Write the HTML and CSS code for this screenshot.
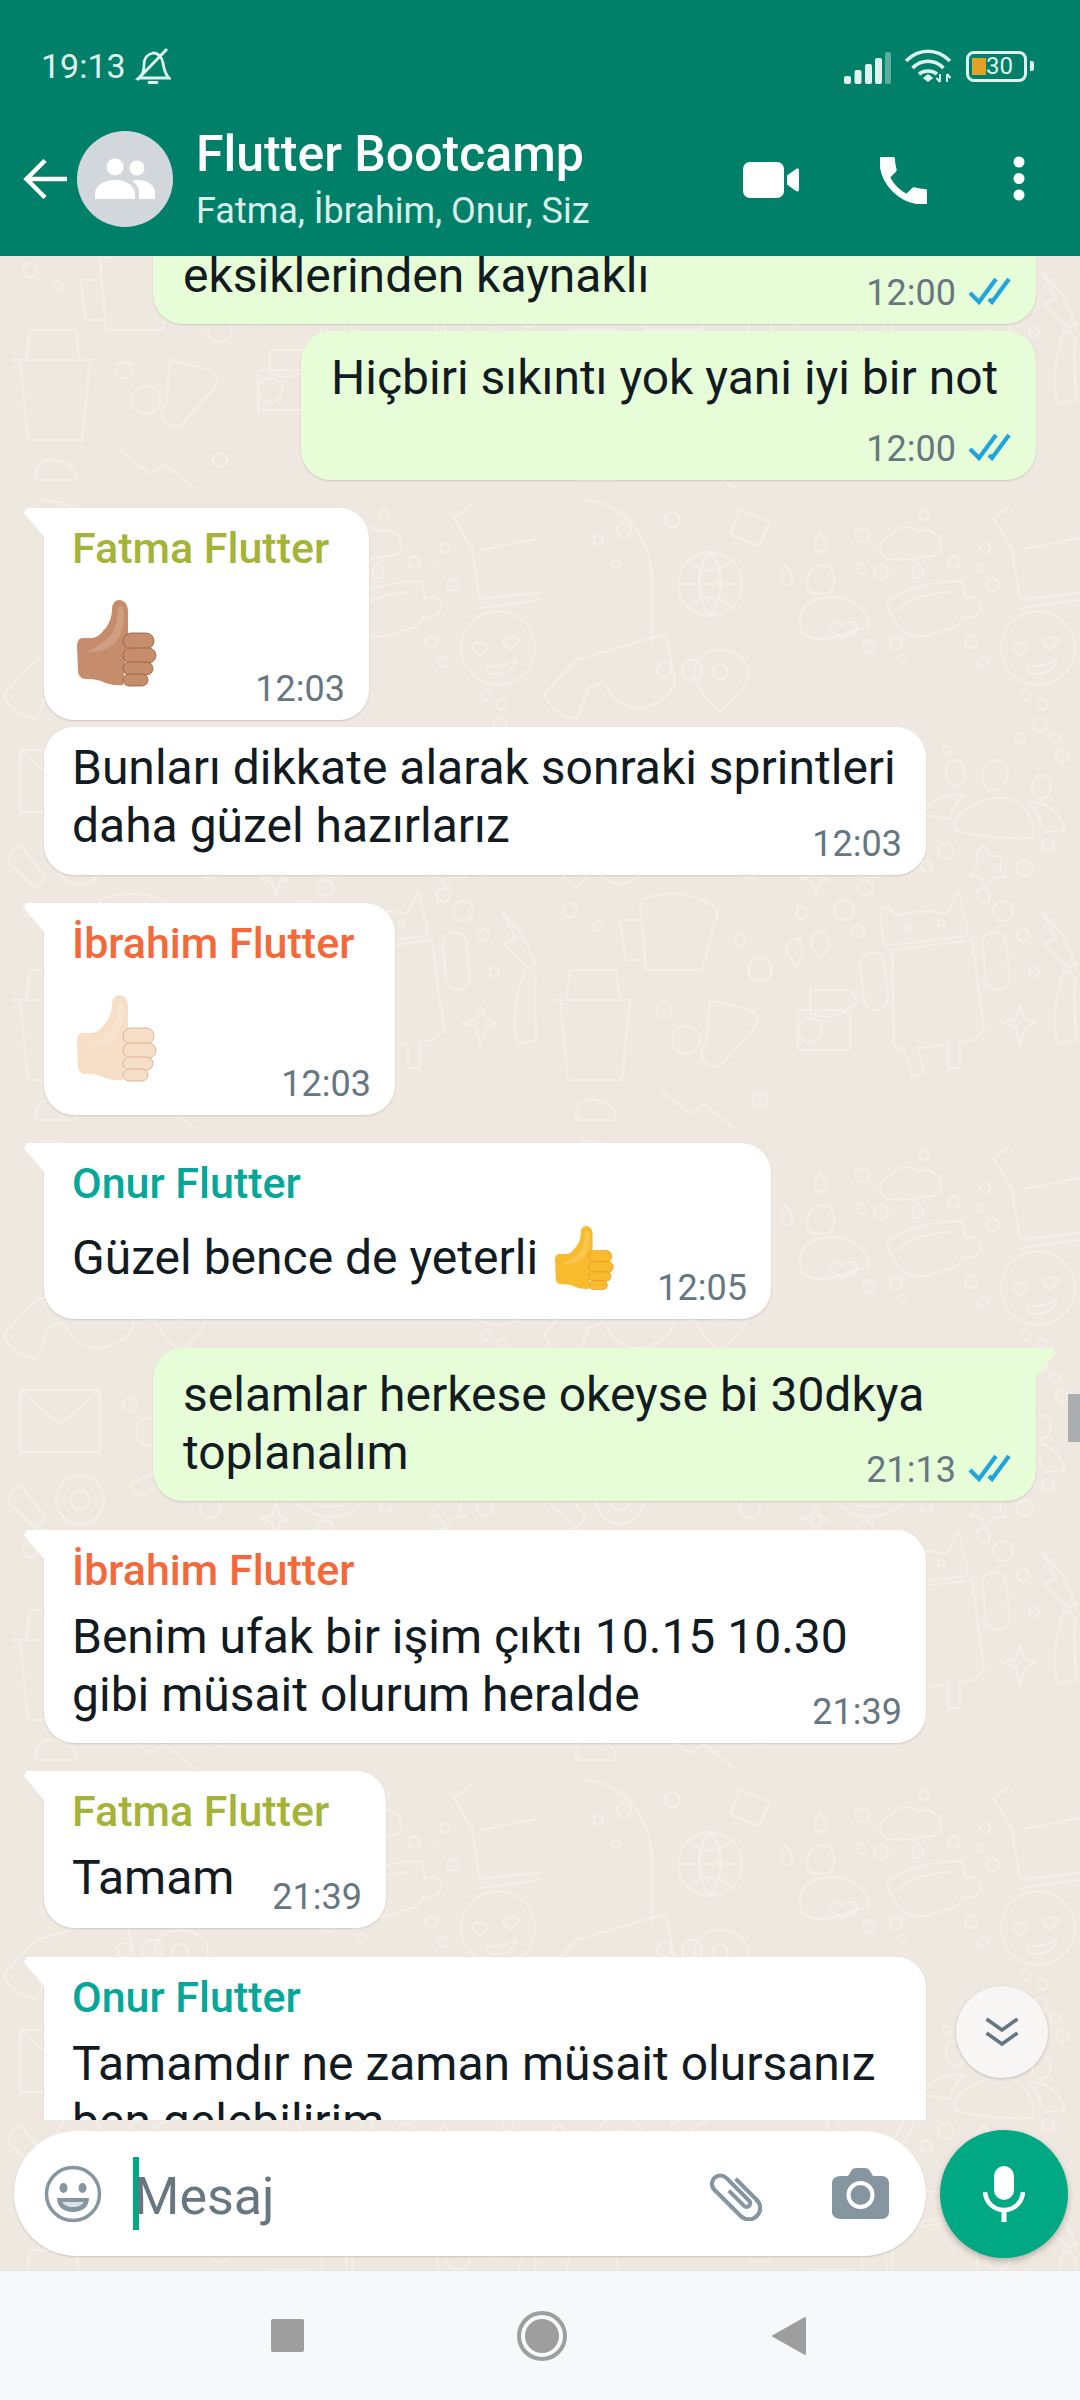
FILE: index.html
```html
<!DOCTYPE html>
<html>
<head>
    <meta charset="utf-8">
    <meta name="viewport" content="width=device-width, initial-scale=1">
    <title>Flutter Bootcamp</title>

    <link rel="stylesheet" href="styles.css">

</head>
<body>
    <svg class="defs" width="0" height="0">
        <symbol id="thumb" viewBox="0 0 80 88">
            <path class="hand" d="M42 0c6 0 9 5 9 12v22l-5 51c-8 1-16-1-22-4-6-2-12-2-16-2-5-1-7-4-7-9L0 46c0-5 2-8 6-8h8c5 0 9-3 12-7 6-6 9-14 9-22 0-5 3-9 7-9z"/>
            <path d="M43 6c3 0 4 4 4 8 0 9-2 20-8 28-8 8-18 10-30 10 14-6 26-14 30-28 2-8 1-18 4-18z" fill="#fff" opacity=".16"/>
            <rect class="finger" x="46" y="33" width="31" height="16" rx="8"/>
            <rect class="finger" x="46" y="48" width="33" height="15" rx="7.5"/>
            <rect class="finger" x="46" y="62" width="30" height="13" rx="6.5"/>
            <rect class="finger" x="46" y="74" width="25" height="12" rx="6"/>
        </symbol>
        <symbol id="ticks" viewBox="0 0 43 28">
            <path d="M2 16l9 9L28 2M21 22l3 3L41 2" fill="none" stroke="#1fa5dc" stroke-width="4.2"/>
        </symbol>
    </svg>

    <div class="screen">
        <svg class="doodles" width="1080" height="2270">
            <defs>
                <pattern id="tile" width="540" height="640" patternUnits="userSpaceOnUse" patternTransform="translate(780 500)">
                    <g fill="none" stroke="#f4efe9" stroke-width="2" stroke-linejoin="round" stroke-linecap="round">
                        <path d="M105 58c-8-8-6-20 6-22 4-10 20-12 26-4 10-6 24 2 24 12 2 8-4 12-12 12-14 2-30 6-44 2z"/>
                        <path d="M40 32c-6 10-8 18 0 20 8 0 10-8 0-20zM138 62c-6 8-8 16 0 16 8 0 6-8 0-16zM5 65c-5 8-6 20 2 20 7 0 8-10-2-20z"/>
                        <circle cx="82" cy="35" r="7"/>
                        <circle cx="81" cy="69" r="5"/>
                        <circle cx="101" cy="72" r="7"/>
                        <circle cx="174" cy="62" r="6"/>
                        <circle cx="205" cy="48" r="5"/>
                        <circle cx="200" cy="68" r="4"/>
                        <circle cx="213" cy="85" r="6"/>
                        <circle cx="144" cy="15" r="5"/>
                        <circle cx="89" cy="146" r="6"/>
                        <circle cx="116" cy="143" r="6"/>
                        <circle cx="122" cy="158" r="4"/>
                        <circle cx="191" cy="142" r="6"/>
                        <circle cx="203" cy="162" r="5"/>
                        <path d="M44 65c-12 0-18 10-17 20 1 8 8 9 16 9 10 0 12-10 11-16-1-6-4-13-10-13z"/>
                        <path d="M20 125c-2-20 14-28 34-28 18 0 36 14 34 30-14 2-28 10-42 12-14 0-24-2-26-14zM48 128c2-6 10-8 14-2 8-8 18-2 14 6l-14 6z"/>
                        <path d="M107 105c8-16 50-24 74-24 4 10 4 14 4 18 10-6 18 2 16 10-4 8-12 10-18 8l-6 10c-18 4-28 10-40 10-14-2-22-14-30-32zM118 110c10-12 36-18 54-18"/>
                        <path d="M230 5l-16 14 18 30 8 50 60-6"/>
                        <path d="M240 50l60-12M240 108l60-8"/>
                        <circle cx="258" cy="148" r="37"/>
                        <path d="M232 148c4-8 14-6 16 0l-8 8zM262 142c6-6 14-6 18-2l-10 10zM246 165c10 2 22 0 30-5-2 10-10 14-20 14-6 0-10-3-10-9z"/>
                        <circle cx="246" cy="195" r="5"/>
                        <circle cx="262" cy="204" r="5"/>
                        <circle cx="260" cy="225" r="7"/>
                        <circle cx="240" cy="238" r="5"/>
                        <circle cx="275" cy="238" r="5"/>
                        <circle cx="282" cy="256" r="6"/>
                        <circle cx="167" cy="250" r="4"/>
                        <path d="M176 260c-10 0-12 12-8 20 2 8 14 8 16-2 2-8 0-18-8-18zM216 260c-12 0-16 14-12 24 4 8 18 8 22-2 4-10 0-22-10-22zM262 275c-8 0-12 12-8 20 4 6 14 4 16-4 2-8-2-16-8-16z"/>
                        <path d="M144 315c2-10 14-22 40-20-8 8-12 14-14 24zM174 330c0-20 26-32 48-32 20 0 32 18 32 40-26 2-58-2-80-8zM248 302c18-2 36 14 36 28l-20 2c-4-10-6-22-16-30z"/>
                        <circle cx="90" cy="333" r="44"/>
                        <circle cx="90" cy="333" r="34"/>
                        <path d="M78 308l6 25c2 4 8 2 8-2l-2-26"/>
                        <circle cx="166" cy="351" r="8"/>
                        <circle cx="146" cy="366" r="6"/>
                        <circle cx="245" cy="368" r="8"/>
                        <circle cx="268" cy="345" r="6"/>
                        <path d="M204 345l8 12 10-2-2 14 6 8-12 0-8 10-6-10-10-2 8-10-2-12z"/>
                        <path d="M36 362l4 14 8 4-8 2-4 14-4-14-12-4 12-2z"/>
                        <circle cx="85" cy="388" r="8"/>
                        <circle cx="64" cy="410" r="10"/>
                        <circle cx="22" cy="413" r="6"/>
                        <circle cx="78" cy="431" r="6"/>
                        <circle cx="203" cy="395" r="7"/>
                        <circle cx="223" cy="411" r="10"/>
                        <circle cx="243" cy="435" r="6"/>
                        <circle cx="254" cy="472" r="5"/>
                        <path d="M100 408c6-4 12 4 18 8 14-6 36-6 48-2 6-6 8-18 12-22 6 8 2 18 6 24 4 8 4 14 2 20l-82 10c-2-12-2-24-4-38z"/>
                        <circle cx="127" cy="428" r="3"/>
                        <circle cx="161" cy="423" r="3"/>
                        <path d="M112 450l80-10 12 90-10 10-14 2v26h-12v-24l-30 4 6 26-12 2-8-26-10-4z"/>
                        <rect x="82" y="452" width="24" height="58" rx="12" transform="rotate(-6 94 481)"/>
                        <rect x="204" y="432" width="24" height="58" rx="12" transform="rotate(-6 216 461)"/>
                        <path d="M18 438c-12 2-16 16-6 20l2 8c6-2 10-10 8-18 0-4-2-8-4-10zM42 432c-12 0-14 14-6 20l4 6c6-4 12-14 8-20-2-4-4-6-6-6z"/>
                        <path d="M262 412l20 22 14 30-8 4-24-24 12-6z"/>
                        <path d="M30 490h40l8 12c-16 14-34 20-48 10zM18 510h52v40H18z"/>
                        <circle cx="30" cy="530" r="12"/>
                        <path d="M240 505l6 14 10 4-10 4-6 18-4-18-14-4 14-4z"/>
                        <path d="M284 472c10-2 14 10 10 18l2 50-18 4c-6-16-4-44 6-72z"/>
                        <!-- second half of the tile -->
                        <path d="M312 130l90-26 8 44c2 18-24 32-40 30-14-2-26-14-30-26l-16 6-10 30c-14 2-30-12-34-24z" transform="translate(24 30)"/>
                        <path d="M340 0c46 0 72 40 72 84v60"/>
                        <circle cx="358" cy="40" r="5"/>
                        <circle cx="376" cy="64" r="4"/>
                        <circle cx="384" cy="30" r="7"/>
                        <circle cx="470" cy="84" r="32"/>
                        <path d="M438 84h64M470 52c-14 14-14 48 0 64M470 52c14 14 14 48 0 64M448 60c14 14 30 14 44 0M448 108c14-14 30-14 44 0"/>
                        <circle cx="432" cy="20" r="8"/>
                        <path d="M500 10l30 12-12 24-28-12z"/>
                        <circle cx="424" cy="170" r="7"/>
                        <circle cx="452" cy="170" r="10"/>
                        <path d="M480 150c16 0 28 10 28 22 0 16-18 30-28 40-10-10-26-24-26-40 0-12 12-22 26-22z"/>
                        <circle cx="480" cy="172" r="8"/>
                        <path d="M320 250h80v62h-80zM320 250l40 34 40-34"/>
                        <circle cx="430" cy="265" r="7"/>
                        <circle cx="450" cy="292" r="14"/>
                        <path d="M500 240l12 26 26 4-20 18 4 26-22-14-22 14 6-26-20-18 26-4z"/>
                        <circle cx="380" cy="360" r="24"/>
                        <circle cx="380" cy="360" r="10"/>
                        <path d="M320 345c-12 4-16 20-4 24l20 20 10-12z"/>
                        <path d="M430 345l60-32 8 10-60 34z"/>
                        <circle cx="510" cy="368" r="10"/>
                        <circle cx="330" cy="410" r="7"/>
                        <circle cx="358" cy="426" r="5"/>
                        <path d="M400 400c30-12 60-6 78 10l-16 60h-56z"/>
                        <path d="M400 420h-20l6 40h20"/>
                        <circle cx="500" cy="440" r="6"/>
                        <circle cx="520" cy="470" r="12"/>
                        <path d="M320 500h70l-8 80h-54zM314 500h82M330 470h46l4 30h-54z"/>
                        <circle cx="424" cy="510" r="8"/>
                        <circle cx="446" cy="540" r="14"/>
                        <path d="M470 500l40 10c8 4 10 12 4 18l-30 34c-6 6-14 6-18 0-6-6-6-12 0-18z"/>
                        <path d="M348 600c-8 0-14 8-12 20h40c0-12-8-20-28-20zM420 590l30 24 14-10 30 24"/>
                        <circle cx="520" cy="600" r="7"/>
                    </g>
                </pattern>
            </defs>
            <rect width="1080" height="2270" fill="url(#tile)"/>
        </svg>

        <header class="top">
            <div class="statusbar">
                <span class="clock">19:13</span>
                <svg class="bell" width="36" height="38" viewBox="0 0 36 38" fill="none" stroke="#dff3ee" stroke-width="2.8">
                    <path d="M4 31c4-3 5-7 5-13 0-7 4-11 9-12 5 0 9 4 10 10 1 7 2 11 6 15z"/>
                    <path d="M14 35.500h8" stroke-linecap="round"/>
                    <path d="M2 33L32 2" stroke-width="3"/>
                </svg>
                <svg class="signal" width="48" height="32" viewBox="0 0 48 32" fill="#dff3ee">
                    <rect x="0" y="24" width="7" height="8" rx="2"/>
                    <rect x="10.500" y="18" width="7" height="14" rx="2"/>
                    <rect x="21" y="12" width="7" height="20" rx="2"/>
                    <rect x="31" y="6" width="7" height="26" rx="2"/>
                    <rect x="41" y="0" width="6" height="32" rx="2" opacity=".4"/>
                </svg>
                <svg class="wifi" width="46" height="34" viewBox="0 0 46 34" fill="none" stroke="#dff3ee" stroke-width="3.6">
                    <path d="M1 12c13-13 31-13 44 0"/>
                    <path d="M7.500 19c9-9 22-9 31 0"/>
                    <path d="M14 25c5-4 13-4 18 0"/>
                    <path d="M19 29l4-3 4 3-4 3z" fill="#dff3ee" stroke-width="1.500"/>
                    <path d="M35 25v8M31.500 29l3.500 4M42 25v8M42 25l3.500 4" stroke-width="2"/>
                </svg>
                <div class="battery">
                    <div class="battery-fill"></div>
                    <span class="battery-text">30</span>
                </div>
                <div class="battery-nub"></div>
            </div>
            <div class="toolbar">
                <svg class="back" width="44" height="42" viewBox="0 0 44 42" fill="none" stroke="#fff" stroke-width="4.500">
                    <path d="M44 21H4M22 2.500L3.500 21 22 39.500"/>
                </svg>
                <div class="avatar">
                    <svg width="62" height="42" viewBox="0 0 62 42" fill="#fff">
                        <circle cx="21" cy="9" r="8.500"/>
                        <circle cx="43" cy="10" r="7.500"/>
                        <path d="M1 41v-5c0-9 10-14 20-14s20 5 20 14v5z"/>
                        <path d="M45 41v-6c0-5-2-9-7-12 2-1 4-1 6-1 9 0 17 5 17 12v7z"/>
                    </svg>
                </div>
                <div class="group-info">
                    <div class="group-name">Flutter Bootcamp</div>
                    <div class="group-members">Fatma, İbrahim, Onur, Siz</div>
                </div>
                <svg class="icon-video" width="56" height="36" viewBox="0 0 56 36" fill="#fff">
                    <rect width="41" height="36" rx="7"/>
                    <path d="M44 13.500l9-6.500c1.500-1 3-.5 3 1.500v19c0 2-1.500 2.500-3 1.500l-9-6.500z"/>
                </svg>
                <svg class="icon-call" width="47" height="47" viewBox="3 3 18 18" fill="#fff" stroke="#fff" stroke-width=".5" stroke-linejoin="round">
                    <path d="M6.620 10.790c1.440 2.830 3.760 5.140 6.590 6.590l2.200-2.200c.27-.27.67-.36 1.020-.24 1.120.37 2.330.57 3.570.57.55 0 1 .45 1 1V20c0 .55-.45 1-1 1-9.390 0-17-7.610-17-17 0-.55.45-1 1-1h3.500c.55 0 1 .45 1 1 0 1.250.2 2.450.57 3.570.11.35.03.74-.25 1.020l-2.200 2.200z"/>
                </svg>
                <svg class="icon-more" width="12" height="45" viewBox="0 0 12 45" fill="#fff">
                    <circle cx="6" cy="6" r="5.500"/>
                    <circle cx="6" cy="22.500" r="5.500"/>
                    <circle cx="6" cy="39" r="5.500"/>
                </svg>
            </div>
        </header>

        <main class="chat">
            <div class="messages">
                <div class="bubble out w-long first">
                    <div class="text">eksiklerinden kaynaklı</div>
                    <div class="meta over">12:00 <svg class="tick"><use href="#ticks"/></svg></div>
                </div>
                <div class="bubble out w-mid same">
                    <div class="text">Hiçbiri sıkıntı yok yani iyi bir not</div>
                    <div class="meta below">12:00 <svg class="tick"><use href="#ticks"/></svg></div>
                </div>

                <div class="bubble in tail w-fatma">
                    <div class="name fatma">Fatma Flutter</div>
                    <svg class="emoji medium"><use href="#thumb"/></svg>
                    <div class="meta after-emoji">12:03</div>
                </div>
                <div class="bubble in w-wide same">
                    <div class="text">Bunları dikkate alarak sonraki sprintleri<br>daha güzel hazırlarız</div>
                    <div class="meta over">12:03</div>
                </div>

                <div class="bubble in tail w-ibrahim">
                    <div class="name ibrahim">İbrahim Flutter</div>
                    <svg class="emoji light"><use href="#thumb"/></svg>
                    <div class="meta after-emoji">12:03</div>
                </div>

                <div class="bubble in tail w-onur">
                    <div class="name onur">Onur Flutter</div>
                    <div class="text with-emoji">
                        <span>Güzel bence de yeterli</span>
                        <svg class="emoji-small"><use href="#thumb"/></svg>
                    </div>
                    <div class="meta over-emoji">12:05</div>
                </div>

                <div class="bubble out tail w-long wide-gap">
                    <div class="text">selamlar herkese okeyse bi 30dkya<br>toplanalım</div>
                    <div class="meta over">21:13 <svg class="tick"><use href="#ticks"/></svg></div>
                </div>

                <div class="bubble in tail w-wide wide-gap">
                    <div class="name ibrahim">İbrahim Flutter</div>
                    <div class="text">Benim ufak bir işim çıktı 10.15 10.30<br>gibi müsait olurum heralde</div>
                    <div class="meta over tight">21:39</div>
                </div>

                <div class="bubble in tail w-tamam">
                    <div class="name fatma">Fatma Flutter</div>
                    <div class="text">Tamam</div>
                    <div class="meta over loose">21:39</div>
                </div>

                <div class="bubble in tail w-wide wide-gap">
                    <div class="name onur">Onur Flutter</div>
                    <div class="text">Tamamdır ne zaman müsait olursanız<br>ben gelebilirim</div>
                </div>
            </div>

            <div class="scrollbar"></div>
            <div class="to-bottom">
                <svg width="34" height="30" viewBox="0 0 34 30" fill="none" stroke="#667781" stroke-width="3.600">
                    <path d="M1.500 2l15.500 11L32.500 2M1.500 16l15.500 11 15.500-11"/>
                </svg>
            </div>
        </main>

        <footer class="composer">
            <div class="input-pill">
                <svg class="icon-smile" width="58" height="58" viewBox="0 0 58 58">
                    <circle cx="29" cy="29" r="26.500" fill="none" stroke="#8696a0" stroke-width="3.500"/>
                    <ellipse cx="19.500" cy="23" rx="4" ry="5" fill="#8696a0"/>
                    <ellipse cx="38.500" cy="23" rx="4" ry="5" fill="#8696a0"/>
                    <path d="M13 33h32c0 9-7 14-16 14s-16-5-16-14z" fill="#8696a0"/>
                    <path d="M18 37h22c-2 3-6 5-11 5s-9-2-11-5z" fill="#fff" opacity=".7"/>
                </svg>
                <div class="cursor"></div>
                <div class="placeholder">Mesaj</div>
                <svg class="icon-clip" width="58" height="54" viewBox="-29 -27 58 54" fill="none" stroke="#8696a0" stroke-width="3.400">
                    <path transform="rotate(-45) scale(1.2)" d="M7-11v25a9.500 9.500 0 0 1-19 0v-31a7 7 0 0 1 14 0v27a3 3 0 0 1-6 0V-8"/>
                </svg>
                <svg class="icon-camera" width="57" height="51" viewBox="0 0 57 51">
                    <path d="M8 8h8l3-5c1-2 3-3 5-3h9c2 0 4 1 5 3l3 5h9c4 0 7 3 7 7v29c0 4-3 7-7 7H8c-4 0-8-3-8-7V15c0-4 4-7 8-7z" fill="#8696a0"/>
                    <circle cx="28.500" cy="27" r="12" fill="none" stroke="#fff" stroke-width="4"/>
                </svg>
            </div>
            <div class="mic-button">
                <svg width="42" height="56" viewBox="0 0 42 56" fill="#fff">
                    <rect x="11" y="0" width="20" height="34" rx="10"/>
                    <path d="M2 26c1 11 9 18 19 18s18-7 19-18" fill="none" stroke="#fff" stroke-width="4.500"/>
                    <rect x="18.500" y="42" width="5" height="14"/>
                </svg>
            </div>
        </footer>

        <nav class="navbar">
            <div class="nav-square"></div>
            <div class="nav-home"><div class="nav-home-dot"></div></div>
            <svg class="nav-back" width="35" height="38" viewBox="0 0 35 38" fill="#9e9e9e" stroke="#9e9e9e" stroke-width="2" stroke-linejoin="round">
                <path d="M2 19L34 1v36z"/>
            </svg>
        </nav>
    </div>
</body>
</html>
```

FILE: styles.css
```css
body {
    margin: 0;
    font-family: Roboto, "Noto Sans", sans-serif;
    color: #111b21;
}
svg {
    display: block;
    flex: none;
}
.defs {
    position: absolute;
}
.screen {
    width: 1080px;
    height: 2400px;
    position: relative;
    overflow: hidden;
    display: flex;
    flex-direction: column;
    background-color: #efe8e0;
}
.doodles {
    position: absolute;
    top: 0;
    left: 0;
}

/* header */
.top {
    position: relative;
    z-index: 2;
    height: 256px;
    background-color: #008069;
    color: #fff;
}
.statusbar {
    height: 52px;
    padding: 40px 0 0 41px;
    display: flex;
    align-items: center;
    color: #dff3ee;
}
.clock {
    font-size: 34px;
    width: 94px;
}
.signal {
    margin-left: 673px;
    margin-top: 4px;
}
.wifi {
    margin-left: 13px;
    margin-top: -1px;
}
.battery {
    width: 55px;
    height: 25px;
    margin-left: 15px;
    border: 3px solid #dff3ee;
    border-radius: 8px;
    position: relative;
    display: flex;
    align-items: center;
}
.battery-fill {
    width: 14px;
    height: 17px;
    margin-left: 3px;
    background-color: #e2a227;
}
.battery-text {
    font-size: 24px;
    line-height: 25px;
}
.battery-nub {
    width: 4px;
    height: 10px;
    margin-left: 3px;
    border-radius: 0 2px 2px 0;
    background-color: #dff3ee;
}
.toolbar {
    height: 125px;
    padding: 39px 0 0 23px;
    display: flex;
    align-items: flex-start;
}
.back {
    margin-top: 27px;
}
.avatar {
    width: 96px;
    height: 96px;
    margin-left: 10px;
    border-radius: 50%;
    background-color: #d1d7db;
    display: flex;
    align-items: center;
    justify-content: center;
}
.group-info {
    width: 468px;
    margin-left: 23px;
    margin-top: -6px;
}
.group-name {
    font-size: 50px;
    font-weight: 500;
    line-height: 58px;
}
.group-members {
    font-size: 36px;
    line-height: 48px;
    margin-top: 4px;
    color: #d9efe9;
}
.icon-video {
    margin-left: 79px;
    margin-top: 31px;
}
.icon-call {
    margin-left: 81px;
    margin-top: 26px;
}
.icon-more {
    margin-left: 86px;
    margin-top: 25px;
}

/* messages */
.chat {
    position: relative;
    z-index: 1;
    flex: 1;
    min-height: 0;
}
.messages {
    height: 100%;
    overflow: hidden;
    padding: 0 44px;
    display: flex;
    flex-direction: column;
    box-sizing: border-box;
}
.bubble {
    flex: none;
    position: relative;
    box-sizing: border-box;
    margin-top: 28px;
    padding: 12px 24px 11px 28px;
    border-radius: 30px;
    background-color: #fff;
    box-shadow: 0 1px 2px rgba(0, 0, 0, 0.14);
    display: flex;
    flex-direction: column;
}
.bubble.same {
    margin-top: 7px;
}
.bubble.wide-gap {
    margin-top: 29px;
}
.bubble.first {
    margin-top: -27px;
}
.bubble.in {
    align-self: flex-start;
}
.bubble.out {
    align-self: flex-end;
    background-color: #e6fdd8;
    padding: 18px 25px 11px 30px;
}
.bubble.tail.in {
    border-top-left-radius: 0;
}
.bubble.tail.out {
    border-top-right-radius: 0;
}
.bubble.tail::before {
    content: "";
    position: absolute;
    top: 0;
    width: 20px;
    height: 29px;
    background-color: inherit;
}
.bubble.tail.in::before {
    left: -20px;
    clip-path: polygon(3px 0, 100% 0, 100% 100%, 0 5px);
}
.bubble.tail.out::before {
    right: -20px;
    clip-path: polygon(0 0, calc(100% - 3px) 0, 100% 5px, 0 100%);
}
.w-long { width: 883px; }
.w-mid { width: 735px; }
.w-wide { width: 882px; }
.w-fatma { width: 325px; }
.w-ibrahim { width: 351px; }
.w-onur { width: 727px; }
.w-tamam { width: 342px; }

.name {
    font-size: 43px;
    font-weight: 500;
    line-height: 56px;
    margin-bottom: 10px;
    white-space: nowrap;
}
.fatma { color: #a5b337; }
.ibrahim { color: #f4693a; }
.onur { color: #06a698; }

.text {
    font-size: 48px;
    line-height: 58px;
    white-space: nowrap;
}
.text.with-emoji {
    margin-top: 8px;
    height: 58px;
    display: flex;
}
.meta {
    align-self: flex-end;
    height: 40px;
    font-size: 36px;
    line-height: 40px;
    color: #667781;
    display: flex;
    align-items: center;
    white-space: nowrap;
}
.meta.over { margin-top: -31px; }
.out .meta.over { margin-top: -32px; }
.meta.over.tight { margin-top: -32px; }
.meta.over.loose { margin-top: -30px; }
.meta.below { margin-top: 22px; }
.meta.over-emoji { margin-top: -19px; }
.meta.after-emoji { margin-top: -19px; }
.tick {
    width: 43px;
    height: 28px;
    margin-left: 12px;
    margin-top: -4px;
}
.emoji {
    width: 80px;
    height: 88px;
    margin: 14px 0 0 5px;
}
.emoji.medium {
    --skin: #c58d6b;
    --skin-dark: #8f5e3f;
}
.emoji.light {
    --skin: #f6dfc6;
    --skin-dark: #d2a685;
}
.emoji-small {
    width: 59px;
    height: 65px;
    margin: -3px 0 0 17px;
    --skin: #f9bb2e;
    --skin-dark: #dc8a10;
}
.hand {
    fill: var(--skin);
}
.finger {
    fill: var(--skin);
    stroke: var(--skin-dark);
    stroke-width: 1;
    stroke-opacity: 0.8;
}

/* overlays in the chat */
.scrollbar {
    position: absolute;
    right: 0;
    top: 1138px;
    width: 12px;
    height: 48px;
    background-color: #a9aeae;
}
.to-bottom {
    position: absolute;
    right: 32px;
    bottom: 42px;
    width: 92px;
    height: 92px;
    border-radius: 50%;
    background-color: #f7f6f4;
    box-shadow: 0 1px 3px rgba(0, 0, 0, 0.2);
    display: flex;
    align-items: center;
    justify-content: center;
}

/* message box */
.composer {
    position: relative;
    z-index: 1;
    height: 150px;
    box-sizing: border-box;
    padding: 0 12px 3px 14px;
    display: flex;
    align-items: center;
    gap: 14px;
}
.input-pill {
    width: 912px;
    height: 125px;
    box-sizing: border-box;
    padding: 0 37px 0 30px;
    border-radius: 63px;
    background-color: #fff;
    box-shadow: 0 1px 2px rgba(0, 0, 0, 0.16);
    display: flex;
    align-items: center;
}
.cursor {
    width: 6px;
    height: 73px;
    margin-left: 31px;
    background-color: #00a884;
}
.placeholder {
    flex: 1;
    font-size: 52px;
    color: #667781;
    margin-left: -5px;
    margin-top: 5px;
}
.icon-clip {
    margin-right: 64px;
}
.mic-button {
    flex: none;
    width: 128px;
    height: 128px;
    border-radius: 50%;
    background-color: #00a884;
    box-shadow: 0 3px 6px rgba(0, 0, 0, 0.25);
    display: flex;
    align-items: center;
    justify-content: center;
}

/* android nav */
.navbar {
    position: relative;
    z-index: 1;
    height: 130px;
    box-sizing: border-box;
    border-top: 1px solid #e6e6e4;
    background-color: #f6f8fa;
    padding-left: 271px;
    display: flex;
    align-items: center;
}
.nav-square {
    width: 33px;
    height: 33px;
    border-radius: 2px;
    background-color: #9e9e9e;
}
.nav-home {
    width: 50px;
    height: 50px;
    box-sizing: border-box;
    margin-left: 213px;
    border: 4px solid #9e9e9e;
    border-radius: 50%;
    display: flex;
    align-items: center;
    justify-content: center;
}
.nav-home-dot {
    width: 34px;
    height: 34px;
    border-radius: 50%;
    background-color: #9e9e9e;
}
.nav-back {
    margin-left: 204px;
}
```
